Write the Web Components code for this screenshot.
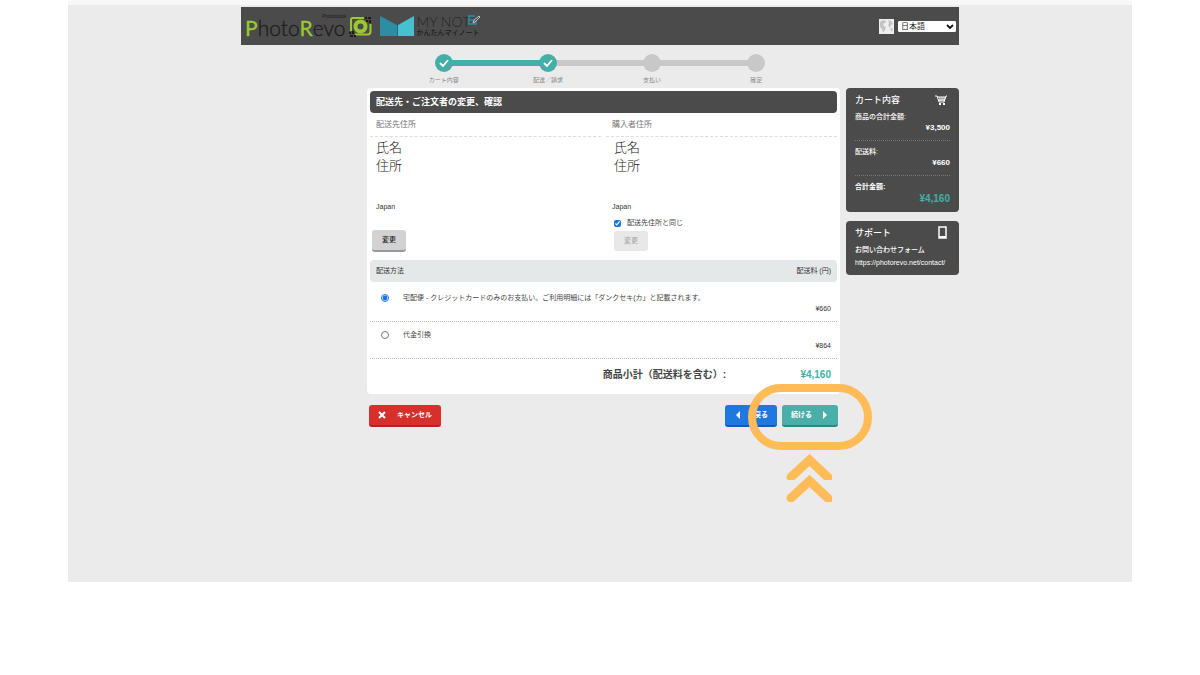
<!DOCTYPE html>
<html lang="ja">
<head>
<meta charset="utf-8">
<title>PhotoRevo - 配送先・ご注文者の変更、確認</title>
<style>
body{margin:0;background:#fff;color:#444;font:7px/10px "Liberation Sans","Noto Sans CJK JP",sans-serif;
--dark:#4b4b4b;--teal:#45aea8;--grey:#c8c8c8;--mark:#ffbb55}
</style>
</head>
<body>
<checkout-page></checkout-page>
<script>
function define(name, html){
  const t=document.createElement('template');
  t.innerHTML='<style>*{box-sizing:border-box}:host{display:block}h1,h2,p,dl,dd,ol{margin:0;padding:0}button,select,input{font:inherit;margin:0}</style>'+html;
  customElements.define(name,class extends HTMLElement{
    constructor(){super();this.attachShadow({mode:'open'}).append(t.content.cloneNode(true));}
  });
}

define('brand-logo',`
<style>
:host{display:flex;align-items:center;gap:7px;color:#1c1c1c}
.photo{position:relative;display:flex;align-items:center;gap:3px;font:300 21px/24px Lato,sans-serif;-webkit-text-stroke:.3px}
.photo span{padding-top:4px}
.photo b{font-weight:400;color:#9bc832}
.photo small{position:absolute;left:77px;top:0;font:5px/8px Lato,sans-serif;-webkit-text-stroke:0}
.note{display:flex;align-items:center;gap:2px}
.words{display:grid;position:relative}
.my{font:300 14px/13px Lato,sans-serif;color:#252525}
.ja{font-weight:500;line-height:9px}
.pen{position:absolute;left:51px;top:0}
svg{display:block}
</style>
<div class="photo"><span><b>P</b>hoto<b>R</b>evo</span><small>Photobook</small>
<svg width="24" height="21" viewBox="0 0 24 21" fill="none"><path d="M7 2H3.500Q2 2 2 3.500V15M6 18.500H18.500Q21.500 18.500 21.500 15.500V8" stroke="#9bc832" stroke-width="2"/><path d="M7 2h8" stroke="#9bc832" stroke-width="2"/><circle cx="11.500" cy="10.500" r="5" stroke="#9bc832" stroke-width="4"/><path d="M16 1h2v2h-2zM19 1h3v2h-3zM17 4h2v2h-2zM20 4h2v3h-2zM0 16h2v2H0zM3 15h2v3H3zM1 19h3v2H1zM5 19h2v2H5z" fill="#1c1c1c"/></svg></div>
<div class="note"><svg width="35" height="22" viewBox="0 0 35 22"><path d="M0 1l17 9v11H0z" fill="#2c8da5"/><path d="M18 10L34 1v20H18z" fill="#46c1cf"/><path d="M17 10l1 0v11h-1z" fill="#266878"/></svg>
<div class="words"><span class="my">MY NOT</span><span class="ja">かんたんマイノート</span>
<svg class="pen" width="13" height="11" viewBox="0 0 13 11" fill="none"><path d="M7 1H1v8h7V6M1 5h5" stroke="#2c8da5" stroke-width="1.500"/><path d="M5 8l1-3 5-4 1 1-5 5z" stroke="#c4c4c4"/></svg></div></div>`);

define('language-picker',`
<style>
:host{display:flex;align-items:center;gap:4px}
select{width:58px;height:11px;padding:0;border:1px solid #fff;border-radius:1px;background:#fff;color:#222;font-size:8px;line-height:9px;appearance:none;padding-left:2px}
.pick{position:relative;display:flex}
.pick svg{position:absolute;right:2px;top:3px;pointer-events:none}
</style>
<svg width="15" height="15" viewBox="0 0 15 15"><path d="M0 0h15v15H0z" fill="#eee"/><path d="M1 3l3-2 3 1-1 2-2 1 1 2 2 1-1 3-2 3-1-4-2-2zM9 1l3 1 2 3-2 1-1 3-2-3 1-2zM11 10l3-1-1 4z" fill="#c4c4c4"/></svg>
<div class="pick"><select aria-label="言語"><option>日本語</option></select><svg width="8" height="6" viewBox="0 0 8 6"><path d="M1 1l3 3 3-3" fill="none" stroke="#111" stroke-width="1.800"/></svg></div>`);

define('site-header',`
<style>:host{display:flex;justify-content:space-between;align-items:center;height:38px;padding:0 3px 0 4px;background:var(--dark)}</style>
<brand-logo></brand-logo><language-picker></language-picker>`);

define('progress-step',`
<style>
:host{flex:1;display:grid;justify-items:center;position:relative;color:#888;font-size:6px;line-height:10px}
:host([line])::before{content:"";position:absolute;height:6px;top:6px;left:-50%;width:100%;background:var(--grey)}
:host([line][done])::before{background:var(--teal)}
i{position:relative;z-index:1;display:grid;place-items:center;width:18px;height:18px;margin-bottom:3px;border-radius:50%;background:var(--grey)}
:host([done]) i{background:var(--teal)}
svg{display:none}:host([done]) svg{display:block}
</style>
<i><svg width="10" height="8" viewBox="0 0 10 8"><path d="M1 4l3 3 5-6" fill="none" stroke="#fff" stroke-width="1.800"/></svg></i><slot></slot>`);

define('progress-steps',`
<style>:host{display:flex;width:58%;margin:9px auto 3px}</style>
<progress-step done>カート内容</progress-step><progress-step line done>配送／請求</progress-step><progress-step line>支払い</progress-step><progress-step line>確定</progress-step>`);

define('address-card',`
<style>
h2{padding:7px 6px 6px;border-bottom:1px dashed #ddd;font-size:8px;line-height:10px;font-weight:400;color:#777}
.name{padding:2px 6px 0;font-size:13px;line-height:18px;font-weight:300;color:#222}
:host([inset]) .name{padding-left:8px}
.country{padding:27px 6px 10px;color:#333}
</style>
<h2><slot name="title"></slot></h2>
<div class="name">氏名<br>住所</div><div class="country">Japan</div>
<slot></slot>`);

define('address-section',`
<style>
:host{display:grid;grid-template-columns:1fr 1fr;column-gap:5px;padding-bottom:8px}
button{display:block;width:34px;height:22px;border:0;border-bottom:2px solid #999;border-radius:3px;background:#d2d2d2;color:#222;font-weight:500;padding:0}
.first{margin:8px 0 0 2px}
.same{display:flex;align-items:center;gap:6px;padding-left:8px;margin-bottom:2px;line-height:12px;margin-top:-5px}
.same input{width:7px;height:7px;accent-color:#1a73e8}
.second{margin-left:8px;height:20px;background:#e8e8e8;border-bottom:0;color:#aaa}
address-card+address-card{margin-left:-5px;padding-left:5px}
</style>
<address-card><span slot="title">配送先住所</span><button class="first" type="button">変更</button></address-card>
<address-card inset><span slot="title">購入者住所</span><div class="same"><input id="same" type="checkbox" checked><label for="same">配送先住所と同じ</label></div><button class="second" type="button" disabled>変更</button></address-card>`);

define('delivery-options',`
<style>
table{width:100%;border-spacing:0;text-align:left}
th{height:22px;padding:0 6px;background:#e5e8e8;font-weight:400;color:#333}
th:first-child{border-radius:4px 0 0 4px}th:last-child{border-radius:0 4px 4px 0;text-align:right}
td{padding:8px 6px 7px 11px;border-bottom:1px dotted #bbb;height:37px;vertical-align:top}
tr:first-child td{padding-top:11px;height:40px}
td:last-child{vertical-align:bottom;text-align:right;color:#333}
.choice{display:flex;align-items:center;gap:14px;line-height:10px}
input{width:8px;height:8px;accent-color:#1a73e8}
dl{display:flex;justify-content:flex-end;align-items:center;padding:9px 6px 12px;font-weight:700;font-size:10px;line-height:14px}
dd{width:105px;text-align:right;color:var(--teal)}
</style>
<table><thead><tr><th>配送方法</th><th>配送料 (円)</th></tr></thead><tbody>
<tr><td><div class="choice"><input type="radio" name="ship" id="home" checked><label for="home">宅配便 - クレジットカードのみのお支払い。ご利用明細には「ダンクセキ(カ」と記載されます。</label></div></td><td>¥660</td></tr>
<tr><td><div class="choice"><input type="radio" name="ship" id="cod"><label for="cod">代金引換</label></div></td><td>¥864</td></tr></tbody></table>
<dl><dt>商品小計（配送料を含む）:</dt><dd>¥4,160</dd></dl>`);

define('checkout-panel',`
<style>
:host{padding:3px 3px 0;background:#fff;border-radius:4px}
h1{padding:0 6px;border-radius:4px;background:var(--dark);color:#fff;font-size:9px;line-height:22px}
</style>
<h1>配送先・ご注文者の変更、確認</h1><address-section></address-section><delivery-options></delivery-options>`);

define('highlight-mark',`
<style>
:host{position:absolute;top:-21px;right:-34px;width:124px;pointer-events:none}
.ring{height:66px;border:8px solid var(--mark);border-radius:33px}
svg{display:block;margin:4px 0 0 38px}
</style>
<div class="ring"></div>
<svg width="47" height="49" viewBox="0 0 47 49" fill="none" stroke="#ffbb55" stroke-width="9"><clipPath id="a"><path d="M0 0h46v26H0z"/></clipPath><clipPath id="b"><path d="M0 20h46v28H0z"/></clipPath><path clip-path="url(#a)" d="M5 23L23.500 6 47 28" stroke-linecap="round"/><path clip-path="url(#b)" d="M5 44L23.500 27 47 49" stroke-linecap="round"/></svg>`);

define('checkout-actions',`
<style>
:host{position:relative;display:flex;gap:5px;margin:11px 2px 0}
button{display:flex;align-items:center;justify-content:center;gap:10px;height:22px;border:0;border-bottom:2px solid;border-radius:3px;padding:0 9px;color:#fff;font-weight:700;line-height:10px}
.cancel{margin-right:auto;background:#d7302c;border-color:#b32421}
.back{background:#1f78df;border-color:#165cad;gap:13px}
.next{background:#4aafa9;border-color:#35837e}
</style>
<button class="cancel" type="button"><svg width="9" height="8" viewBox="0 0 9 8"><path d="M1 1l6 6M7 1L1 7" stroke="#fff" stroke-width="2"/></svg>キャンセル</button>
<button class="back" type="button"><svg width="7" height="8" viewBox="0 0 7 8"><path d="M6 0v8L2 4z" fill="#fff"/></svg><span>戻る</span></button>
<button class="next" type="button"><span>続ける</span><svg width="7" height="8" viewBox="0 0 7 8"><path d="M1 0v8l4-4z" fill="#fff"/></svg></button>
<highlight-mark></highlight-mark>`);

define('side-card',`
<style>
:host{padding:5px 9px 6px;border-radius:4px;background:var(--dark);color:#fff}
header{display:flex;justify-content:space-between;align-items:center;height:13px;margin-bottom:4px}
h2{font-size:9px;line-height:12px;font-weight:500}
</style>
<header><h2><slot name="title"></slot></h2><slot name="icon"></slot></header><slot></slot>`);

define('order-sidebar',`
<style>
:host{display:grid;gap:9px}
dl{font-weight:500;padding-top:2px}
dd{text-align:right;font-size:8px;font-weight:700;line-height:12px;padding-bottom:6px;border-bottom:1px dotted #777;margin-bottom:6px}
dd.total{font-size:10px;color:var(--teal);line-height:14px;border:0;margin:0;padding:0}
dt.total{font-weight:700}
a{color:inherit;text-decoration:none}
.links{display:grid;line-height:13px;font-weight:500;white-space:nowrap}
svg{margin-right:3px}
p{line-height:13px}
</style>
<side-card><span slot="title">カート内容</span><svg slot="icon" width="12" height="10" viewBox="0 0 12 10"><path d="M0 1h2l2 6h5l2-6h1M2 2h8M3 5h7M5 2v4M7 2v4M9 2v4" fill="none" stroke="#fff"/><path d="M4 8h2v2H4zM8 8h2v2H8z" fill="#fff"/></svg>
<dl><dt>商品の合計金額:</dt><dd>¥3,500</dd><dt>配送料:</dt><dd>¥660</dd><dt class="total">合計金額:</dt><dd class="total">¥4,160</dd></dl></side-card>
<side-card><span slot="title">サポート</span><svg slot="icon" width="9" height="13" viewBox="0 0 9 13"><rect x="1" y="1" width="7" height="11" fill="none" stroke="#fff" stroke-width="1.500"/><path d="M1 10h7v2H1z" fill="#fff"/></svg>
<div class="links"><p>お問い合わせフォーム</p><a href="https://photorevo.net/contact/">https://photorevo.net/contact/</a></div></side-card>`);

define('checkout-page',`
<style>
:host{max-width:1064px;margin:0 auto}
.stage{border-top:5px solid #f8f8f8;background:#ebebeb;padding:2px 0 155px}
.site{max-width:718px;margin:0 auto}
.cols{display:grid;grid-template-columns:minmax(0,1fr) 113px;gap:6px;padding-left:126px;align-items:start}
</style>
<div class="stage"><div class="site"><site-header></site-header><progress-steps></progress-steps>
<div class="cols"><main><checkout-panel></checkout-panel><checkout-actions></checkout-actions></main><order-sidebar></order-sidebar></div></div></div>`);
</script>
</body>
</html>
